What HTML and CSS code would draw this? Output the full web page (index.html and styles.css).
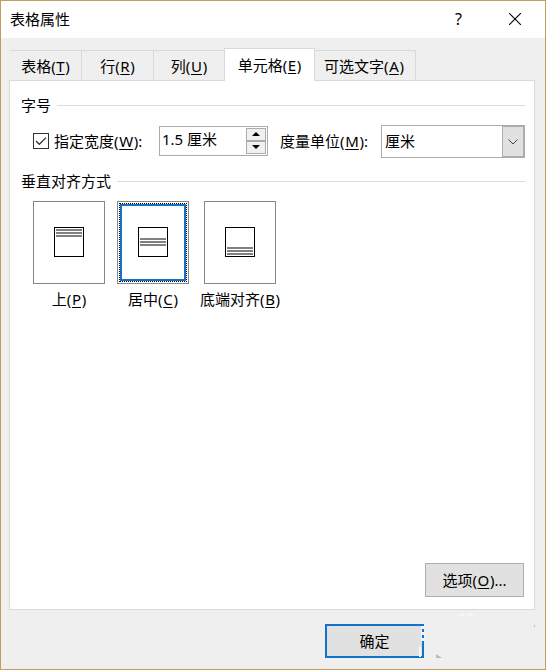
FILE: index.html
```
<!DOCTYPE html>
<html lang="zh-CN">
<head>
    <meta charset="UTF-8">
    <meta name="viewport" content="width=device-width, initial-scale=1.0">
    <title>表格属性</title>
    <link rel="stylesheet" href="styles.css">
</head>
<body>
    <div class="dialog">
        <div class="titlebar">
            <span class="title">表格属性</span>
            <span class="help">?</span>
            <svg class="close" width="12" height="12" viewBox="0 0 12 12">
                <path d="M0 0L12 12M12 0L0 12" stroke="#000" stroke-width="1.1" fill="none"/>
            </svg>
        </div>

        <div class="tabs">
            <div class="tab tab-table"><span>表格(<u>T</u>)</span></div>
            <div class="tab tab-row"><span>行(<u>R</u>)</span></div>
            <div class="tab tab-column"><span>列(<u>U</u>)</span></div>
            <div class="tab tab-cell active"><span>单元格(<u>E</u>)</span></div>
            <div class="tab tab-alt"><span>可选文字(<u>A</u>)</span></div>
        </div>

        <div class="panel">
            <div class="group-title">字号</div>
            <div class="size-row">
                <span class="checkbox">
                    <svg width="14" height="14" viewBox="0 0 14 14">
                        <path d="M2 7L5.3 10.3L12 3.6" stroke="#333" stroke-width="1.3" fill="none"/>
                    </svg>
                </span>
                <span class="width-label">指定宽度(<u>W</u>):</span>
                <div class="spinner">
                    <span class="spinner-value">1.5 厘米</span>
                    <div class="spinner-buttons">
                        <span><svg width="8" height="4" viewBox="0 0 8 4"><path d="M0 4L4 0L8 4Z"/></svg></span>
                        <span><svg width="8" height="4" viewBox="0 0 8 4"><path d="M0 0L4 4L8 0Z"/></svg></span>
                    </div>
                </div>
                <span class="unit-label">度量单位(<u>M</u>):</span>
                <div class="select">
                    <span class="select-value">厘米</span>
                    <span class="select-button">
                        <svg width="10" height="6" viewBox="0 0 10 6"><path d="M0.5 0.5L5 5L9.5 0.5" stroke="#444" fill="none"/></svg>
                    </span>
                </div>
            </div>

            <div class="group-title">垂直对齐方式</div>
            <div class="align-row">
                <div class="option">
                    <div class="tile"><div class="page top"><i></i><i></i><i></i></div></div>
                    <span>上(<u>P</u>)</span>
                </div>
                <div class="option">
                    <div class="tile selected"><div class="focus"><div class="page middle"><i></i><i></i><i></i></div></div></div>
                    <span>居中(<u>C</u>)</span>
                </div>
                <div class="option">
                    <div class="tile"><div class="page bottom"><i></i><i></i><i></i></div></div>
                    <span>底端对齐(<u>B</u>)</span>
                </div>
            </div>

            <div class="button options">选项(<u>O</u>)...</div>
        </div>

        <div class="footer">
            <div class="button ok">确定</div>
        </div>

        <svg class="marks" width="120" height="50" viewBox="0 0 120 50">
            <path d="M2 14h4v3h-3v3h3v3h-3v3h3v3h-4zM0 35h2v10h-2z" fill="#f3f6f8"/>
            <path d="M40 4q2.500 -4 5 0M49 4q2.500 -4 5 0" stroke="#fafafa" stroke-width="1.500" fill="none"/>
            <path d="M17 42L23 46h-6z" fill="#bbb"/>
            <path d="M115 13h1v2h-1z" fill="#bbb"/>
        </svg>
    </div>
</body>
</html>
```
FILE: styles.css
```
* {
    box-sizing: border-box;
}
body {
    margin: 0;
    font-family: "Noto Sans", "Noto Sans CJK SC", sans-serif;
    font-size: 15px;
    line-height: 20px;
    color: #000;
    white-space: nowrap;
}
u {
    padding: 0 0.7px;
    text-decoration-thickness: 1px;
    text-underline-offset: 2px;
    text-decoration-skip-ink: none;
}
.dialog {
    position: relative;
    width: 546px;
    height: 670px;
    border: 1px solid #c39c60;
    background: #efefef;
    display: flex;
    flex-direction: column;
}
.titlebar {
    height: 37px;
    background: #fff;
    display: flex;
    align-items: center;
    padding: 0 24px 1px 9px;
}
.title {
    flex: 1;
}
.help {
    margin-right: 47px;
    font-size: 16px;
}
.tabs {
    height: 32px;
    margin: 10px 0 0 8px;
    padding-left: 1px;
    display: flex;
    align-items: flex-end;
}
.tab {
    height: 30px;
    border-top: 1px solid #d9d9d9;
    border-right: 1px solid #d9d9d9;
    display: flex;
    align-items: center;
    justify-content: center;
}
.tab-table {
    width: 72px;
}
.tab-row {
    width: 72px;
}
.tab-column {
    width: 70px;
    border-right: none;
}
.tab-cell {
    width: 91px;
}
.tab-alt {
    width: 101px;
    padding-right: 2px;
}
.tab.active {
    height: 33px;
    margin-bottom: -1px;
    border-left: 1px solid #d9d9d9;
    background: #fff;
    z-index: 1;
}
.panel {
    width: 526px;
    height: 530px;
    margin-left: 8px;
    padding: 14px 9px 12px 11px;
    background: #fff;
    border: 1px solid #d9d9d9;
    display: flex;
    flex-direction: column;
}
.group-title {
    display: flex;
    align-items: center;
    gap: 6px;
    height: 20px;
}
.group-title::after {
    content: "";
    flex: 1;
    height: 1px;
    background: #dcdcdc;
}
.size-row {
    display: flex;
    align-items: center;
    height: 33px;
    margin: 10px 0 13px;
    padding-left: 12px;
}
.checkbox {
    width: 16px;
    height: 16px;
    margin-bottom: 2px;
    border: 1px solid #333;
    display: flex;
}
.width-label {
    width: 105px;
    margin: 0 0 2px 5px;
}
.spinner {
    width: 109px;
    height: 30px;
    margin: 0 12px 2px 0;
    border: 1px solid #ababab;
    display: flex;
    justify-content: space-between;
}
.spinner-value {
    padding: 2px 0 0 2px;
}
.spinner-buttons {
    display: flex;
    flex-direction: column;
    width: 21px;
    padding: 1px 1px 1px 0;
}
.spinner-buttons span {
    flex: 1;
    border: 1px solid #acacac;
    background: #f0f0f0;
    display: flex;
    align-items: center;
    justify-content: center;
}
.unit-label {
    flex: 1;
    margin-bottom: 2px;
}
.select {
    width: 144px;
    height: 33px;
    border: 1px solid #ababab;
    display: flex;
    align-items: center;
    justify-content: space-between;
    padding-left: 3px;
}
.select-value {
    margin-bottom: 2px;
}
.select-button {
    width: 22px;
    height: 31px;
    border: 1px solid #adadad;
    background: #e1e1e1;
    display: flex;
    align-items: center;
    justify-content: center;
}
.align-row {
    display: flex;
    margin-top: 10px;
    padding-left: 12px;
}
.option {
    width: 72px;
    margin-right: 12px;
    display: flex;
    flex-direction: column;
    align-items: center;
    gap: 5px;
}
.option:last-child {
    margin: 0 0 0 3px;
}
.tile {
    width: 72px;
    height: 83px;
    border: 1px solid #868686;
    padding-bottom: 1px;
    display: flex;
    align-items: center;
    justify-content: center;
}
.selected {
    padding: 1px;
}
.focus {
    width: 68px;
    height: 79px;
    border: 1px dotted #000;
    box-shadow: inset 0 0 0 2px #1173c7;
    padding-bottom: 1px;
    display: flex;
    align-items: center;
    justify-content: center;
}
.page {
    width: 30px;
    height: 30px;
    border: 1px solid #000;
    padding: 1px;
    display: flex;
    flex-direction: column;
    gap: 1px;
}
.page i {
    height: 2px;
    background: #808080;
}
.middle {
    justify-content: center;
}
.bottom {
    justify-content: flex-end;
}
.button {
    width: 99px;
    height: 34px;
    background: #e1e1e1;
    display: flex;
    align-items: center;
    justify-content: center;
}
.options {
    margin: auto 1px 0 0;
    align-self: flex-end;
    border: 1px solid #adadad;
}
.footer {
    padding: 14px 0 0 324px;
}
.ok {
    border: 2px solid #1173c7;
}
/* light specks over the corner of the footer */
.marks {
    position: absolute;
    left: 418px;
    top: 611px;
}
```
